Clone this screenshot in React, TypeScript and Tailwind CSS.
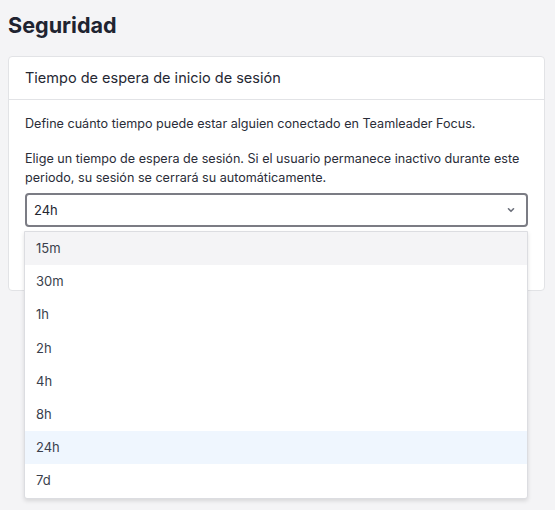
import * as React from "react";

const options = ["15m", "30m", "1h", "2h", "4h", "8h", "24h", "7d"];

function Chevron() {
  return (
    <svg width="10" height="10" viewBox="0 0 10 10" className="text-[#6b6f7a]">
      <path d="M2.5 3.8 5 6.3 7.5 3.8" fill="none" stroke="currentColor" strokeWidth="1.6" strokeLinecap="round" strokeLinejoin="round" />
    </svg>
  );
}

export default function App() {
  const [value] = React.useState("24h");
  const hovered = "15m";

  return (
    <div className="min-h-[510px] w-[555px] bg-[#f4f4f6] px-[8px] pt-[12px] text-[#1f2430]" style={{ fontFamily: "Inter, 'Noto Sans', sans-serif" }}>
      <h1 className="text-[21.6px] font-bold leading-[26px] text-[#202330]">Seguridad</h1>
      <div className="mt-[18px] w-[537px] rounded-[4px] border border-[#e2e3e6] bg-white">
        <div className="border-b border-[#e2e3e6] px-[16px] py-[11px] text-[14.5px] leading-[20px] text-[#252833]">
          Tiempo de espera de inicio de sesión
        </div>
        <div className="px-[16px] pb-[63px] pt-[14px] text-[12.6px] leading-[19px] text-[#2a2d38]">
          <p>Define cuánto tiempo puede estar alguien conectado en Teamleader Focus.</p>
          <p className="mt-[16px]">
            Elige un tiempo de espera de sesión. Si el usuario permanece inactivo durante este periodo, su sesión se cerrará su automáticamente.
          </p>
          <div className="relative mt-[6px]">
            <button
              type="button"
              className="flex h-[34px] w-full items-center justify-between rounded-[4px] border-2 border-[#7b7c84] bg-white pl-[7px] pr-[10px] text-left text-[13px] text-[#23262f]"
            >
              <span>{value}</span>
              <Chevron />
            </button>
            <ul className="absolute left-[-1px] right-0 top-[38px] z-10 rounded-b-[3px] border border-[#dcdde1] bg-white shadow-[0_2px_4px_rgba(0,0,0,0.12)]">
              {options.map((o) => (
                <li
                  key={o}
                  className={
                    "flex h-[33.2px] items-center px-[11px] text-[13px] text-[#3a3f4c] " +
                    (o === value ? "bg-[#eff6fe]" : o === hovered ? "bg-[#f4f4f6]" : "")
                  }
                >
                  {o}
                </li>
              ))}
            </ul>
          </div>
        </div>
      </div>
    </div>
  );
}
